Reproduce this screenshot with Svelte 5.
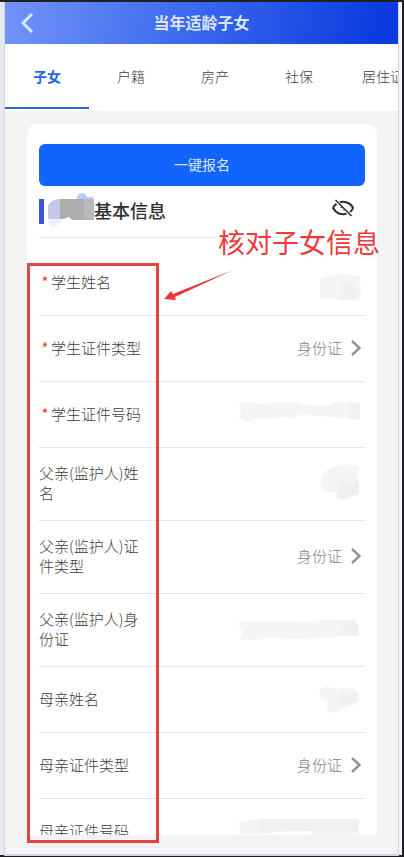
<script lang="ts">
	type Field = {
		id: string;
		label: string;
		required?: boolean;
		picker?: boolean;
		smudge?: string;
		shade?: string;
	};

	const tabs = ['子女', '户籍', '房产', '社保', '居住证'];

	// masked values are drawn in a 124x40 box, right aligned in the row
	const fields: Field[] = [
		{
			id: 'student-name',
			label: '学生姓名',
			required: true,
			smudge: 'M83 17L92 14Q104 10 112 13L123 14L124 31Q122 42 112 38L104 38L83 36Z',
			shade: 'M103 20H120V37H103Z'
		},
		{ id: 'student-type', label: '学生证件类型', required: true, picker: true },
		{
			id: 'student-no',
			label: '学生证件号码',
			required: true,
			smudge: 'M2 10Q12 7 20 10L60 8Q68 12 76 11L94 11Q100 6 108 8H123V26L108 24L80 22L68 20L60 22Q58 26 50 23L16 25Q10 29 6 25L2 25Q5 18 2 10Z',
			shade: 'M112 9H122V25H112Z'
		},
		{
			id: 'father-name',
			label: '父亲(监护人)姓名',
			smudge: 'M84 16Q86 7 96 4Q110 -1 121 4L122 31L106 37Q99 38 98 29H88Q80 25 86 19Z',
			shade: 'M104 19H122V31L106 36Q101 37 100 32Z'
		},
		{ id: 'father-type', label: '父亲(监护人)证件类型', picker: true },
		{
			id: 'father-no',
			label: '父亲(监护人)身份证',
			smudge: 'M2 12H58Q64 15 72 13L84 11H117L122 16V27H104L84 29L54 30L30 28L20 31H3L6 23L2 18Z',
			shade: 'M104 12H117L122 17V26H104Z'
		},
		{
			id: 'mother-name',
			label: '母亲姓名',
			smudge: 'M82 14Q84 6 92 8L100 10Q112 7 120 11L123 23Q112 28 104 30L98 34Q84 34 92 22L86 20Q82 18 82 14Z',
			shade: 'M102 14L120 12L122 21L104 28Z'
		},
		{ id: 'mother-type', label: '母亲证件类型', picker: true },
		{
			id: 'mother-no',
			label: '母亲证件号码',
			smudge: 'M2 11L22 8H122V24H76L74 20L36 21L32 23H3Z',
			shade: 'M22 8H122V20H22Z'
		}
	];

	let active = $state(0);
	let hidden = $state(true);
</script>

<div class="window">
	<div class="phone">
		<header>
			<button class="back" aria-label="返回">
				<svg viewBox="0 0 12 20"><path d="M11 1L2 10L11 19" /></svg>
			</button>
			<h1>当年适龄子女</h1>
		</header>

		<nav>
			{#each tabs as tab, i}
				<button class:active={active === i} onclick={() => (active = i)}>{tab}</button>
			{/each}
		</nav>

		<main>
			<section class="card">
				<button class="submit">一键报名</button>

				<div class="title">
					<span class="bar"></span>
					<svg class="name" viewBox="0 0 46 36">
						<path d="M1 15Q3 5 14 7V28Q10 36 3 34Q0 33 1 27Z" fill="#eef1fc" />
						<path d="M0 13Q5 7 12 7V27H0Z" fill="#c3c9e6" />
						<circle cx="34" cy="6" r="5" fill="#b5cdfa" />
						<path d="M38 5H45V10H38Z" fill="#b5cdfa" />
						<path d="M12 7H46V28H24L21 25L15 27H12Z" fill="#adadae" />
						<path d="M36 7H46V28H36Z" fill="#b8b8b9" />
					</svg>
					<h2>基本信息</h2>
					<button class="eye" aria-label="显示或隐藏" onclick={() => (hidden = !hidden)}>
						<svg viewBox="0 0 24 18">
							<path d="M9 3.200Q12 2.500 15 3.200Q20 4.500 22 9Q21 11.500 19 13M15.500 14.800Q12 15.800 8 14.500Q4 12.800 2 9Q3 6.500 5.500 4.800" />
							<path d="M10 8L10.500 9M12.500 10.500L13.500 11" class="pupil" />
							{#if hidden}
								<path d="M4.500 1L20.500 17" class="slash" />
							{/if}
						</svg>
					</button>
				</div>

				<form>
					{#each fields as field}
						<div class="row">
							<label for={field.id}>
								{#if field.required}<span class="star">*</span>{/if}{field.label}
							</label>
							{#if field.picker}
								<select id={field.id}>
									<option>身份证</option>
								</select>
								<svg class="chevron" viewBox="0 0 10 16"><path d="M1 1L8.500 8L1 15" /></svg>
							{:else}
								<div class="value">
									<input id={field.id} type="text" readonly />
									<svg viewBox="0 0 124 40">
										<path d={field.smudge} />
										<path d={field.shade} class="shade" />
									</svg>
								</div>
							{/if}
						</div>
					{/each}
				</form>
			</section>
		</main>
	</div>

	<div class="note">
		<div class="note-box"></div>
		<svg class="arrow" viewBox="0 0 70 32">
			<path d="M0 29L7 21L9 24L69 0L11 27L12 30Z" />
		</svg>
		<span class="note-text">核对子女信息</span>
	</div>
</div>

<style>
	:global(body) {
		background: #1f2023;
	}

	.window {
		position: relative;
		box-sizing: border-box;
		height: 100vh;
		padding: 0 4px 1px 5px;
		border: solid #1f2023;
		border-width: 2px 2px 2px 0;
		background: linear-gradient(90deg, #e5e8ee 50%, #f5f5f6 50%);
		font-family: 'Noto Sans CJK SC', sans-serif;
		color: #3e3e40;
	}

	.phone {
		display: flex;
		flex-direction: column;
		height: 100%;
		overflow: hidden;
		background: #f3f3f4;
		box-shadow: 0 1px 0 1px #d3d5da;
	}

	button,
	input,
	select {
		margin: 0;
		padding: 0;
		border: none;
		background: none;
		font: inherit;
		color: inherit;
	}

	button {
		cursor: pointer;
	}

	svg {
		display: block;
		flex: none;
	}

	h1,
	h2 {
		margin: 0;
	}

	header {
		display: grid;
		grid-template-columns: 44px 1fr 44px;
		align-items: center;
		flex: none;
		height: 42px;
		background: linear-gradient(100deg, #7294f8 0%, #3a68ee 48%, #0c3bdf 95%);
		color: #dbe5fd;
	}

	h1 {
		padding-bottom: 2px;
		font-size: 16px;
		line-height: 24px;
		text-align: center;
	}

	.back {
		height: 40px;
		padding-left: 16px;
	}

	.back svg {
		width: 12px;
		height: 20px;
		fill: none;
		stroke: #dbe5fd;
		stroke-width: 3;
	}

	nav {
		display: flex;
		flex: none;
		overflow: hidden;
		background: #fff;
	}

	nav button {
		flex: none;
		box-sizing: border-box;
		width: 84px;
		height: 65px;
		margin-bottom: 2px;
		border-bottom: 2px solid transparent;
		font-size: 14px;
		font-weight: 300;
		line-height: 20px;
	}

	nav .active {
		border-color: #2468dc;
		font-weight: bold;
		color: #1d68e3;
	}

	main {
		display: flex;
		flex-direction: column;
		flex: 1;
		min-height: 0;
		padding: 13px 21px 19px 22px;
	}

	.card {
		flex: 1;
		min-height: 0;
		overflow: hidden;
		padding: 20px 12px 0;
		border-radius: 10px 10px 0 0;
		background: #fff;
	}

	.submit {
		width: 100%;
		height: 42px;
		padding-bottom: 2px;
		border-radius: 6px;
		background: #1264ff;
		font-size: 14px;
		color: #d8e7ff;
	}

	.title {
		display: flex;
		align-items: center;
		box-sizing: border-box;
		height: 52px;
		margin-bottom: 12px;
		border-bottom: 1px solid #ececec;
	}

	.bar {
		width: 5px;
		height: 25px;
		margin-right: 4px;
		background: #3c55dc;
	}

	.name {
		width: 46px;
		height: 36px;
		margin-bottom: 4px;
	}

	h2 {
		flex: 1;
		padding-bottom: 4px;
		font-size: 18px;
		font-weight: 500;
		line-height: 26px;
		color: #303032;
	}

	.eye {
		padding: 0 10px 8px;
	}

	.eye svg {
		width: 24px;
		height: 18px;
		fill: none;
		stroke: #2b2b2d;
		stroke-width: 2;
	}

	.eye .pupil,
	.eye .slash {
		stroke-width: 1.5;
	}

	.row {
		display: flex;
		align-items: center;
		justify-content: space-between;
		box-sizing: border-box;
		min-height: 66px;
		padding: 15px 4px 17px 0;
		border-bottom: 1px solid #e8e8e8;
		font-size: 15px;
		font-weight: 300;
		line-height: 20px;
	}

	label {
		flex: none;
		width: 106px;
	}

	.star {
		display: inline-block;
		width: 12px;
		text-align: center;
		font-weight: 400;
		color: #e5412f;
	}

	select {
		flex: 1;
		min-width: 0;
		appearance: none;
		text-align: right;
		text-align-last: right;
		color: #808286;
	}

	.chevron {
		width: 10px;
		height: 16px;
		margin-left: 9px;
		fill: none;
		stroke: #929498;
		stroke-width: 2.5;
	}

	.value {
		position: relative;
		flex: 1;
		height: 20px;
	}

	.value input {
		width: 100%;
		outline: none;
		text-align: right;
	}

	.value svg {
		position: absolute;
		top: -10px;
		right: 0;
		width: 124px;
		height: 40px;
		fill: #f5f5f5;
		pointer-events: none;
	}

	.value .shade {
		fill: #f0f0f0;
	}

	/* callout drawn over the form */
	.note {
		position: absolute;
		inset: 0;
		pointer-events: none;
		color: #ee3a3a;
	}

	.note-box {
		position: absolute;
		top: 261px;
		bottom: 12px;
		left: 27px;
		box-sizing: border-box;
		width: 132px;
		border: 3px solid #e64344;
	}

	.arrow {
		position: absolute;
		top: 268px;
		left: 164px;
		width: 70px;
		height: 32px;
		fill: #e8383a;
	}

	.note-text {
		position: absolute;
		top: 222px;
		left: 218px;
		font-size: 27px;
		line-height: 36px;
		white-space: nowrap;
	}
</style>
